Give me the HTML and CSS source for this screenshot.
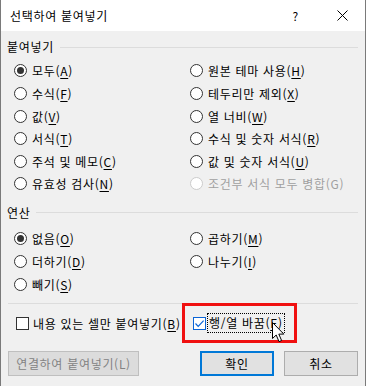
FILE: index.html
```html
<!DOCTYPE html>
<html lang="ko">
<head>
<meta charset="utf-8">
<link rel="stylesheet" href="styles.css">
</head>
<body>
<div class="dialog">
  <div class="titlebar">
    <span class="title">선택하여 붙여넣기</span>
    <span class="help">?</span>
    <span class="close"><svg width="11" height="11" viewBox="0 0 11 11"><path d="M0.5 0.5 L10.5 10.5 M10.5 0.5 L0.5 10.5" stroke="#000" stroke-width="1" fill="none"/></svg></span>
  </div>
  <div class="content">
    <div class="group-head"><span class="group-label">붙여넣기</span><span class="rule"></span></div>
    <div class="grid paste">
      <div class="opt"><span class="radio checked"></span><span>모두(<u>A</u>)</span></div>
      <div class="opt"><span class="radio"></span><span>원본 테마 사용(<u>H</u>)</span></div>
      <div class="opt"><span class="radio"></span><span>수식(<u>F</u>)</span></div>
      <div class="opt"><span class="radio"></span><span>테두리만 제외(<u>X</u>)</span></div>
      <div class="opt"><span class="radio"></span><span>값(<u>V</u>)</span></div>
      <div class="opt"><span class="radio"></span><span>열 너비(<u>W</u>)</span></div>
      <div class="opt"><span class="radio"></span><span>서식(<u>T</u>)</span></div>
      <div class="opt"><span class="radio"></span><span>수식 및 숫자 서식(<u>R</u>)</span></div>
      <div class="opt"><span class="radio"></span><span>주석 및 메모(<u>C</u>)</span></div>
      <div class="opt"><span class="radio"></span><span>값 및 숫자 서식(<u>U</u>)</span></div>
      <div class="opt"><span class="radio"></span><span>유효성 검사(<u>N</u>)</span></div>
      <div class="opt disabled"><span class="radio"></span><span>조건부 서식 모두 병합(G)</span></div>
    </div>
    <div class="group-head op-head"><span class="group-label">연산</span><span class="rule"></span></div>
    <div class="grid ops">
      <div class="opt"><span class="radio checked"></span><span>없음(<u>O</u>)</span></div>
      <div class="opt"><span class="radio"></span><span>곱하기(<u>M</u>)</span></div>
      <div class="opt"><span class="radio"></span><span>더하기(<u>D</u>)</span></div>
      <div class="opt"><span class="radio"></span><span>나누기(<u>I</u>)</span></div>
      <div class="opt"><span class="radio"></span><span>빼기(<u>S</u>)</span></div>
    </div>
    <div class="separator"></div>
    <div class="checks">
      <div class="chk-item first"><span class="checkbox"></span><span>내용 있는 셀만 붙여넣기(<u>B</u>)</span></div>
      <div class="chk-item second">
        <span class="checkbox checked"><svg width="11" height="11" viewBox="0 0 11 11"><path d="M1.5 5.5 L4.2 8.3 L9.6 2.6" stroke="#0a64d6" stroke-width="1.2" fill="none"/></svg></span>
        <span class="focus">행/열 바꿈(<u>E</u>)</span>
        <span class="highlight"></span>
        <svg class="cursor" width="14" height="21" viewBox="0 0 14 21"><path d="M0.5 0.5 L0.5 16.5 L4.2 13 L7 19.6 L9.6 18.5 L6.8 12.1 L11.8 12.1 Z" fill="#fff" stroke="#000" stroke-width="1"/></svg>
      </div>
    </div>
    <div class="buttons">
      <button class="btn link" disabled>연결하여 붙여넣기(L)</button>
      <span class="spacer"></span>
      <button class="btn ok">확인</button>
      <button class="btn cancel">취소</button>
    </div>
  </div>
</div>
</body>
</html>
```
FILE: styles.css
```css
* { box-sizing: border-box; }
html, body { margin: 0; padding: 0; }
body {
  width: 366px;
  height: 386px;
  overflow: hidden;
  font-family: "Noto Sans CJK KR", "Noto Sans", sans-serif;
  font-size: 12px;
  letter-spacing: 0.7px;
  color: #000;
}
.dialog {
  width: 366px;
  height: 386px;
  background: #f0f0f0;
  border-left: 1px solid #7a7a7a;
  border-right: 1px solid #7a7a7a;
  display: flex;
  flex-direction: column;
}
.titlebar {
  height: 31px;
  background: #fff;
  display: flex;
  align-items: center;
  padding-left: 9px;
  flex: none;
}
.title { font-size: 12px; line-height: 16px; }
.help { margin-left: auto; font-size: 12px; margin-right: 38px; }
.close { width: 11px; height: 11px; display: flex; margin-right: 17px; }
.content {
  padding: 8px 7px 0 6px;
  display: flex;
  flex-direction: column;
}
.group-head {
  display: flex;
  align-items: center;
  height: 16px;
}
.group-label { line-height: 16px; }
.rule {
  flex: 1;
  height: 1px;
  background: #dcdcdc;
  margin-left: 6px;
}
.grid {
  display: grid;
  grid-template-columns: 176px 1fr;
  grid-auto-rows: 22.6px;
  padding-left: 7px;
}
.paste { margin-top: 4.7px; }
.op-head { margin-top: 9.7px; }
.ops { margin-top: 6.7px; }
.opt {
  display: flex;
  align-items: center;
  gap: 5px;
  white-space: nowrap;
}
u { text-decoration: underline; text-underline-offset: 2px; }
.radio {
  width: 13px;
  height: 13px;
  border: 1px solid #333;
  border-radius: 50%;
  background: #fff;
  flex: none;
  display: flex;
  align-items: center;
  justify-content: center;
}
.radio.checked::after {
  content: "";
  width: 7px;
  height: 7px;
  border-radius: 50%;
  background: #333;
}
.disabled { color: #a0a0a0; }
.disabled .radio { border-color: #cccccc; background: #fff; }
.separator {
  height: 1px;
  background: #dcdcdc;
  margin-top: 8px;
  margin-left: 1px;
}
.checks {
  display: flex;
  height: 22px;
  margin-top: 8px;
  align-items: center;
}
.chk-item {
  display: flex;
  align-items: center;
  gap: 2px;
  white-space: nowrap;
  position: relative;
}
.first { width: 186px; padding-left: 9px; gap: 4px; }
.checkbox {
  width: 13px;
  height: 13px;
  border: 1px solid #333;
  background: #fff;
  flex: none;
  display: flex;
  align-items: center;
  justify-content: center;
}
.checkbox.checked { border-color: #0a64d6; }
.focus {
  outline: 1px dotted #000;
  padding: 0 1px;
  line-height: 18px;
}
.highlight {
  position: absolute;
  left: -11px;
  top: -11px;
  width: 115px;
  height: 40px;
  border: 3px solid #f01010;
}
.cursor {
  position: absolute;
  left: 79px;
  top: 8px;
}
.buttons {
  display: flex;
  margin-top: 17px;
  gap: 10px;
}
.spacer { flex: 1; }
.btn {
  height: 25px;
  font-family: inherit;
  font-size: 12px;
  letter-spacing: 0.7px;
  background: #e1e1e1;
  border: 1px solid #adadad;
  padding: 0;
  color: #000;
}
.link {
  width: 131px;
  margin-left: 1px;
  background: #dcdcdc;
  border-color: #bfbfbf;
  color: #838383;
}
.ok { width: 74px; border: 2px solid #0078d7; }
.cancel { width: 74px; }
```
